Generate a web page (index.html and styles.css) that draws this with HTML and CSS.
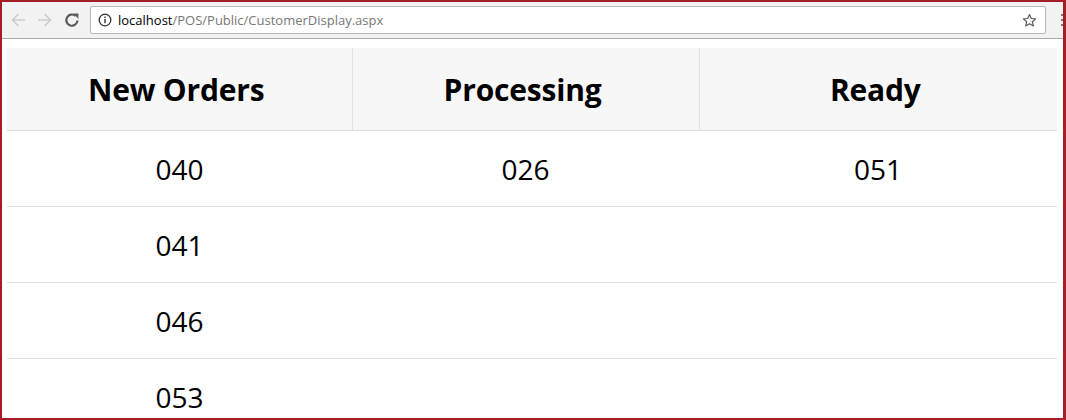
FILE: index.html
```html
<!DOCTYPE html>
<html lang="en">
<head>
  <meta charset="UTF-8" />
  <title>Customer Display</title>
  <link rel="stylesheet" href="styles.css">
</head>
<body>
  <div class="frame">
    <div class="toolbar">
      <div class="nav">
        <svg class="nav-btn" viewBox="0 0 16 16"><path d="M15 8H2.5M8.5 2L2.5 8l6 6" stroke="#cdcdcd" stroke-width="1.7" fill="none"/></svg>
        <svg class="nav-btn" viewBox="0 0 16 16"><path d="M1 8h12.5M7.5 2l6 6-6 6" stroke="#cdcdcd" stroke-width="1.7" fill="none"/></svg>
        <svg class="nav-btn" viewBox="0 0 16 16"><path d="M13.5 8.5A5.6 5.6 0 1 1 11.6 3.9" stroke="#5a5a5a" stroke-width="2.2" fill="none"/><path d="M9.2 1.6h5.2v5.2z" fill="#5a5a5a"/></svg>
      </div>
      <div class="omnibox">
        <svg class="info" viewBox="0 0 14 14"><circle cx="7" cy="7" r="5.8" stroke="#333" stroke-width="1.3" fill="none"/><rect x="6.3" y="6" width="1.4" height="4.2" fill="#333"/><rect x="6.3" y="3.6" width="1.4" height="1.4" fill="#333"/></svg>
        <span class="url"><span class="host">localhost</span>/POS/Public/CustomerDisplay.aspx</span>
        <svg class="star" viewBox="0 0 16 16"><path d="M8 1.6l1.9 4.3 4.6.4-3.5 3 1.1 4.6L8 11.5l-4.1 2.4 1.1-4.6-3.5-3 4.6-.4z" stroke="#555" stroke-width="1.2" fill="none" stroke-linejoin="round"/></svg>
      </div>
      <svg class="menu" viewBox="0 0 17 16"><rect x="15" y="2" width="2" height="2" fill="#777"/><rect x="15" y="7" width="2" height="2" fill="#777"/><rect x="15" y="12" width="2" height="2" fill="#777"/></svg>
    </div>
    <div class="page">
      <table class="board">
        <colgroup>
          <col class="col-new">
          <col class="col-proc">
          <col class="col-ready">
        </colgroup>
        <thead>
          <tr>
            <th>New Orders</th>
            <th>Processing</th>
            <th>Ready</th>
          </tr>
        </thead>
        <tbody>
          <tr><td>040</td><td>026</td><td>051</td></tr>
          <tr><td>041</td><td></td><td></td></tr>
          <tr><td>046</td><td></td><td></td></tr>
          <tr><td>053</td><td></td><td></td></tr>
        </tbody>
      </table>
    </div>
  </div>
</body>
</html>
```

FILE: styles.css
```css
html, body {
  margin: 0;
  padding: 0;
  overflow: hidden;
}
body {
  font-family: "Open Sans", "Noto Sans", sans-serif;
  background: #fff;
  color: #000;
}
.frame {
  width: 1066px;
  height: 420px;
  box-sizing: border-box;
  border: 2px solid #a51d26;
  border-right-width: 3px;
  overflow: hidden;
  display: flex;
  flex-direction: column;
}
.toolbar {
  height: 36px;
  background: #f2f2f2;
  border-bottom: 1px solid #a9a9a9;
  display: flex;
  align-items: center;
  flex-shrink: 0;
}
.nav {
  display: flex;
  align-items: center;
  gap: 11px;
  padding-left: 8px;
  width: 80px;
}
.nav-btn {
  width: 16px;
  height: 16px;
}
.omnibox {
  flex: 1;
  height: 26px;
  background: #fff;
  border: 1px solid #b9b9b9;
  border-radius: 2px;
  display: flex;
  align-items: center;
  padding: 0 8px 0 7px;
}
.info {
  width: 14px;
  height: 14px;
  margin-right: 6px;
}
.url {
  flex: 1;
  font-size: 13px;
  color: #777;
}
.host {
  color: #000;
}
.star {
  width: 15px;
  height: 15px;
}
.menu {
  width: 17px;
  height: 16px;
  flex-shrink: 0;
}
.page {
  flex: 1;
  padding: 9px 6px 0 5px;
}
.board {
  border-collapse: collapse;
  table-layout: fixed;
  width: 1050px;
}
.col-new { width: 345px; }
.col-proc { width: 347px; }
.col-ready { width: 358px; }
.board th {
  background: #f7f7f7;
  height: 82px;
  padding: 0 6px 0 0;
  font-size: 30px;
  font-weight: bold;
  border-left: 1px solid #e2e2e2;
  border-bottom: 1px solid #dddddd;
  letter-spacing: -0.2px;
}
.board th:first-child {
  border-left: none;
}
.board td {
  height: 75px;
  padding: 0;
  text-align: center;
  font-size: 28px;
  border-bottom: 1px solid #dddddd;
}
```
